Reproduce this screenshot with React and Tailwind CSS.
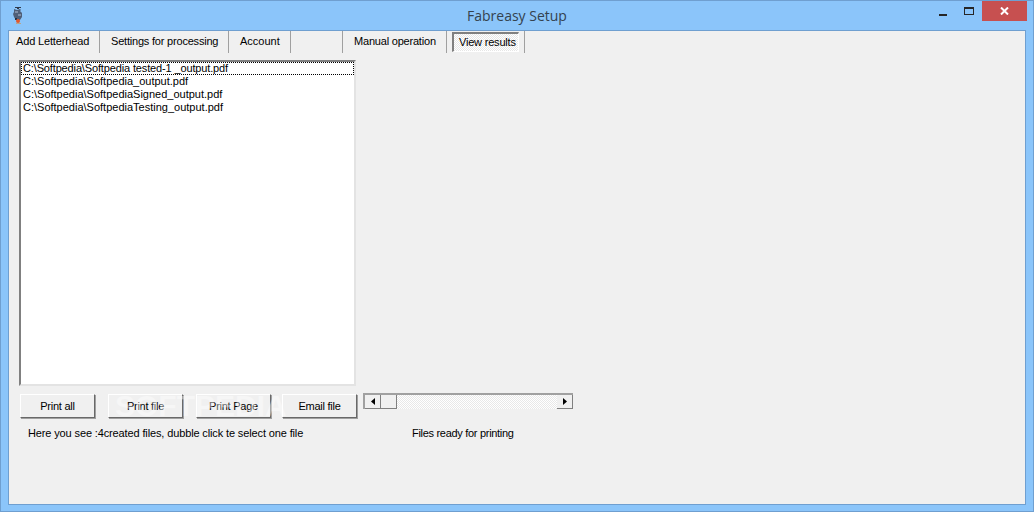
const files = [
  "C:\\Softpedia\\Softpedia tested-1 _output.pdf",
  "C:\\Softpedia\\Softpedia_output.pdf",
  "C:\\Softpedia\\SoftpediaSigned_output.pdf",
  "C:\\Softpedia\\SoftpediaTesting_output.pdf",
];

const buttons = [
  { label: "Print all", cls: "ml-px" },
  { label: "Print file", cls: "ml-[13px]" },
  { label: "Print Page", cls: "ml-[13px]" },
  { label: "Email file", cls: "ml-[11px]" },
];

const AppIcon = () => (
  <svg width="14" height="18" viewBox="0 0 14 18" className="ml-[10px] mt-[6px]">
    <path d="M4 0h6v1H8v1H6V1H4z" fill="#2f3a4c" />
    <path d="M3 2l3 1 3-1 1 1-1 1 2 2v4l-2 3H5L3 10 2 7l1-2z" fill="#4f5f78" />
    <path d="M4 4h3v2H4zM7 7h3v2H7z" fill="#7f8ea6" />
    <path d="M4 11h2v2H4z" fill="#26303f" />
    <circle cx="7" cy="14" r="2" fill="#e2582c" />
    <path d="M5 16h5v1H5z" fill="#b9a48a" />
  </svg>
);

const ScrollBtn = ({ dir }) => (
  <div className="w-[16px] h-[14px] bg-[#f0f0f0] border-r border-b border-[#808080] flex items-center justify-center">
    <svg width="4" height="7" viewBox="0 0 4 7">
      <path d={dir === "left" ? "M4 0v7L0 3.5z" : "M0 0v7l4-3.5z"} fill="#000" />
    </svg>
  </div>
);

export default function App() {
  return (
    <div className="w-[1034px] h-[512px] relative overflow-hidden bg-[#8bc5fa] border border-[#6f9fd0] flex flex-col text-black text-[11px] leading-[14px]" style={{ fontFamily: '"Liberation Sans", Arial, sans-serif' }}>
      {/* title bar */}
      <div className="h-[29px] shrink-0 flex items-start relative">
        <AppIcon />
        <div className="absolute left-[466px] top-[5px] text-[14px] leading-[20px] text-[#34424f]" style={{ fontFamily: '"Open Sans", sans-serif' }}>Fabreasy Setup</div>
        <div className="ml-auto flex items-start mr-[6px]">
          <div className="w-[26px] h-[20px] mr-px flex items-center justify-center">
            <div className="w-[8px] h-[2px] mt-[7px] bg-[#262626]"></div>
          </div>
          <div className="w-[17px] h-[20px] flex items-start justify-end pt-[6px]">
            <div className="w-[10px] h-[8px] border border-t-2 border-[#262626]"></div>
          </div>
          <div className="ml-[8px] w-[45px] h-[20px] bg-[#c75050] flex items-center justify-center">
            <svg width="9" height="8" viewBox="0 0 9 8">
              <path d="M1 0.5l7 7M8 0.5l-7 7" stroke="#fff" strokeWidth="2" />
            </svg>
          </div>
        </div>
      </div>

      {/* client area */}
      <div className="mx-[7px] h-[475px] bg-[#f0f0f0] border border-[#6f9fd0] flex flex-col">
        {/* tabs */}
        <div className="h-[22px] flex items-stretch shrink-0 whitespace-nowrap">
          <div className="w-[91px] pl-[7px] pt-[3px] border-r border-[#a0a0a0] tracking-[-0.15px]">Add Letterhead</div>
          <div className="w-[129px] pl-[11px] pt-[3px] border-r border-[#a0a0a0] tracking-[-0.2px]">Settings for processing</div>
          <div className="w-[62px] pl-[11px] pt-[3px] border-r border-[#a0a0a0]">Account</div>
          <div className="w-[52px] border-r border-[#a0a0a0]"></div>
          <div className="w-[104px] pl-[11px] pt-[3px] border-r border-[#a0a0a0] tracking-[-0.2px]">Manual operation</div>
          <div className="ml-[5px] mt-px w-[67px] h-[20px] pl-[5px] pt-px border-2 border-b border-r border-t-[#808080] border-l-[#808080] border-r-white border-b-white tracking-[-0.2px] bg-[repeating-conic-gradient(#ffffff_0_25%,#e6e6e6_0_50%)] bg-[length:2px_2px]">View results</div>
          <div className="ml-[5px] w-px bg-[#a0a0a0]"></div>
        </div>

        {/* file list */}
        <div className="ml-[10px] mt-[7px] w-[337px] h-[326px] bg-white border-2 border-t-[#808080] border-l-[#808080] border-r-[#e3e3e3] border-b-[#e3e3e3] shrink-0">
          {files.map((f, i) => (
            <div key={f} className={`h-[13px] leading-[13px] pl-[2px] whitespace-nowrap ${i === 0 ? "tracking-[-0.14px] outline-1 -outline-offset-1 outline-dotted outline-black" : ""}`}>{f}</div>
          ))}
        </div>

        {/* buttons + scrollbar */}
        <div className="ml-[10px] mt-[7px] flex items-start shrink-0">
          {buttons.map((b) => (
            <button key={b.label} className={`${b.cls} mt-px w-[75px] h-[24px] bg-[#f0f0f0] border border-t-white border-l-white border-r-[#696969] border-b-[#696969] shadow-[1px_1px_0_#a0a0a0] text-center tracking-[-0.25px]`}>{b.label}</button>
          ))}
          <div className="ml-[6px] w-[210px] h-[16px] border-t-2 border-l-2 border-[#a0a0a0] flex justify-between bg-[repeating-conic-gradient(#ffffff_0_25%,#e8e8e8_0_50%)] bg-[length:2px_2px]">
            <div className="flex">
              <ScrollBtn dir="left" />
              <div className="w-[16px] h-[14px] bg-[#f0f0f0] border-r border-b border-[#808080]"></div>
            </div>
            <ScrollBtn dir="right" />
          </div>
        </div>

        {/* status labels */}
        <div className="flex mt-[8px] whitespace-nowrap">
          <div className="ml-[19px] w-[384px] tracking-[-0.13px]">Here you see :4created files, dubble click te select one file</div>
          <div className="tracking-[-0.3px]">Files ready for printing</div>
        </div>
      </div>

      {/* screenshot watermark */}
      <div className="absolute left-[114px] top-[390px] text-[30px] leading-[30px] font-bold text-white opacity-40 pointer-events-none">SOFTPEDIA</div>
    </div>
  );
}
